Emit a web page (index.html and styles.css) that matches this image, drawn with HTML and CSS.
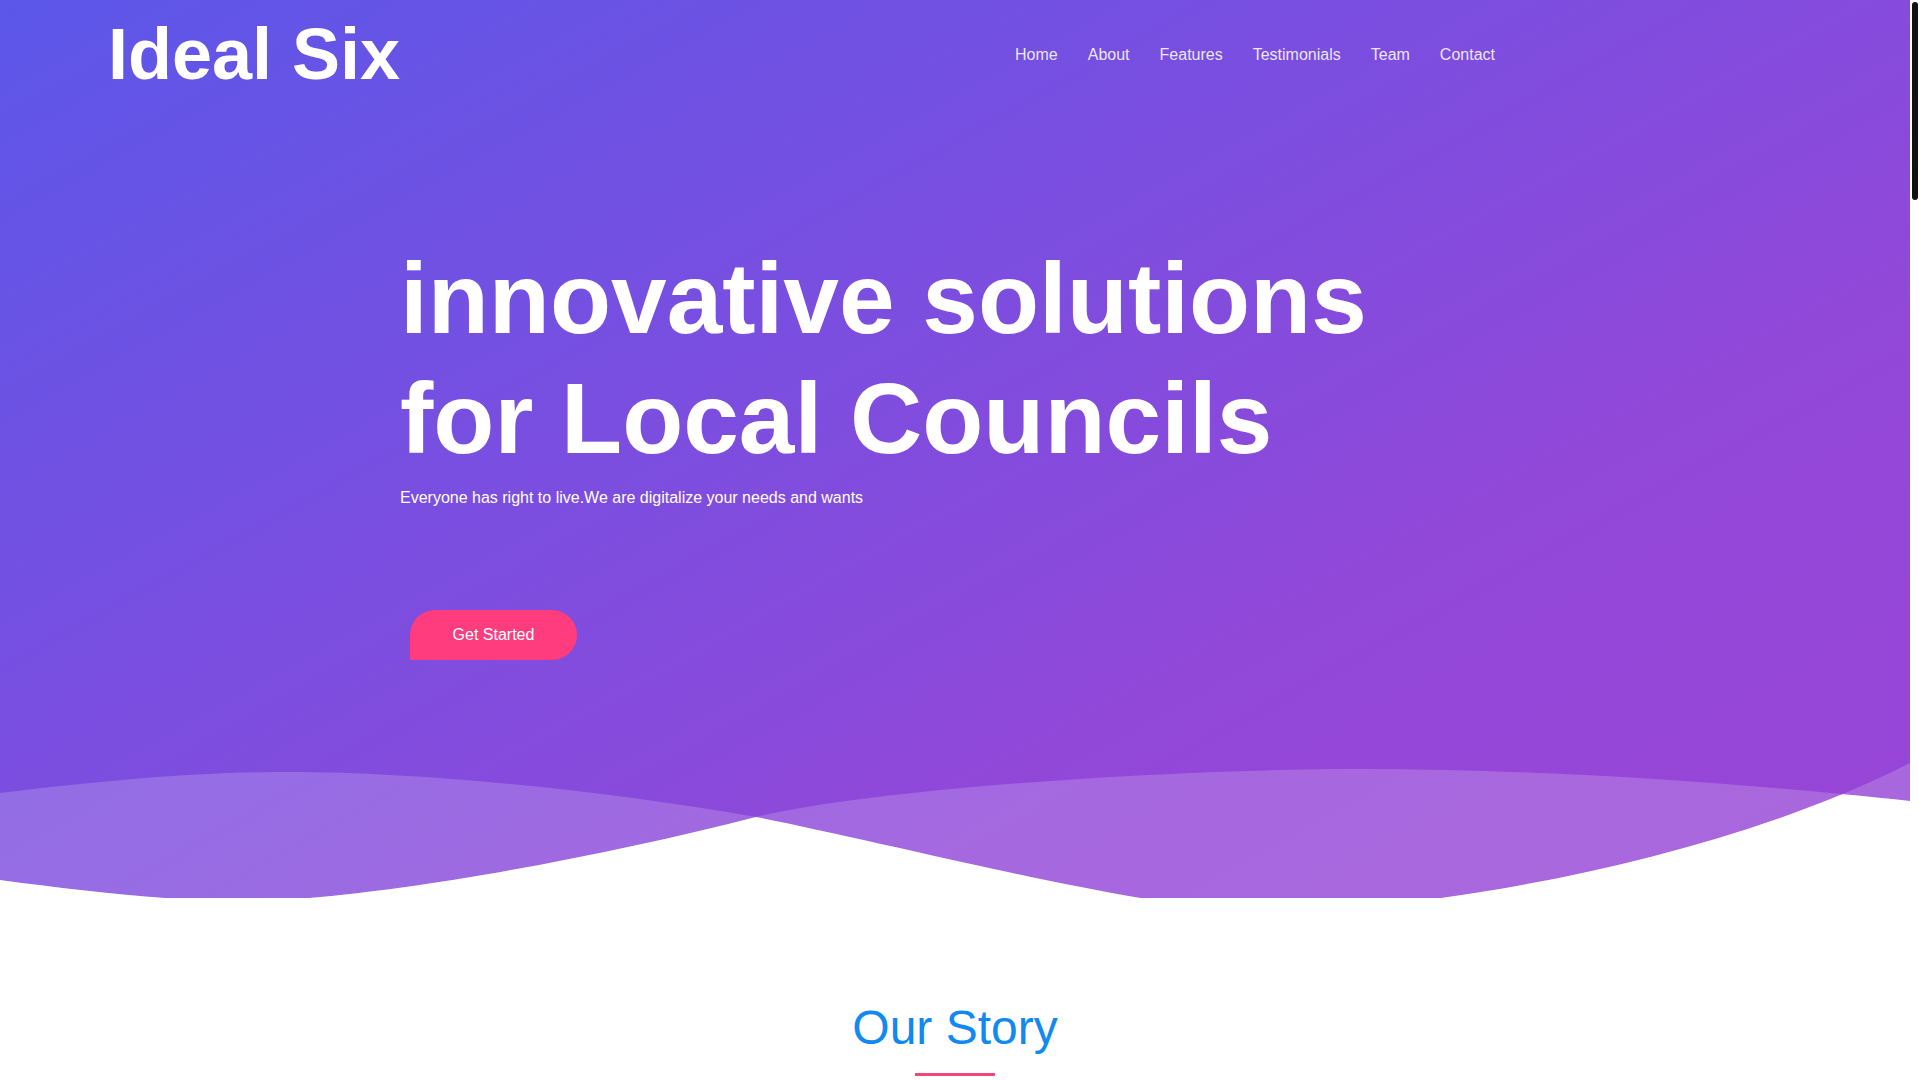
FILE: index.html
```html
<!DOCTYPE html>
<html lang="en">
<head>
<meta charset="utf-8">
<title>Ideal Six</title>
<link rel="stylesheet" href="styles.css">
</head>
<body>
<div class="page">
  <section class="hero">
    <header class="site-header">
      <a class="logo" href="#">Ideal Six</a>
      <nav class="main-nav">
        <a href="#">Home</a>
        <a href="#">About</a>
        <a href="#">Features</a>
        <a href="#">Testimonials</a>
        <a href="#">Team</a>
        <a href="#">Contact</a>
      </nav>
    </header>
    <div class="hero-content">
      <h1 class="hero-title">innovative solutions<br>for Local Councils</h1>
      <p class="hero-sub">Everyone has right to live.We are digitalize your needs and wants</p>
      <a class="btn-start" href="#">Get Started</a>
    </div>
    <svg class="hero-waves" viewBox="0 740 1910 158" preserveAspectRatio="none" aria-hidden="true">
      <defs>
        <clipPath id="clipA">
          <path d="M0 793 C120 779 200 772 290 772 C420 772 600 790 756 817 C900 845 1150 912 1270 912 C1400 912 1700 870 1910 763 L1910 898 L0 898 Z"/>
        </clipPath>
      </defs>
      <path class="wave-light" d="M0 793 C120 779 200 772 290 772 C420 772 600 790 756 817 C900 845 1150 912 1270 912 C1400 912 1700 870 1910 763 L1910 898 L0 898 Z"/>
      <path class="wave-light" d="M0 880 C90 892 170 901 245 901 C360 901 580 862 756 817 C860 791 1150 769 1360 769 C1560 769 1760 785 1910 801 L1910 898 L0 898 Z"/>
      <path class="wave-white" clip-path="url(#clipA)" d="M0 880 C90 892 170 901 245 901 C360 901 580 862 756 817 C860 791 1150 769 1360 769 C1560 769 1760 785 1910 801 L1910 898 L0 898 Z"/>
    </svg>
  </section>
  <section class="story">
    <h2 class="story-title">Our Story</h2>
    <div class="story-line"></div>
  </section>
</div>
<div class="scroll-rail" aria-hidden="true"><div class="scroll-thumb"></div></div>
</body>
</html>
```
FILE: styles.css
```css
html, body {
  margin: 0;
  padding: 0;
}
html {
  overflow: hidden;
}
body {
  font-family: "Liberation Sans", Arial, sans-serif;
  background: #fff;
  color: #222;
}
.page {
  width: calc(100% - 10px);
}
.scroll-rail {
  position: fixed;
  top: 0;
  right: 0;
  width: 10px;
  height: 100vh;
  background: #fff;
}
.scroll-thumb {
  width: 6px;
  height: 198px;
  margin: 2px 0 0 2px;
  background: #111;
  border-radius: 3px;
}
.hero {
  position: relative;
  height: 898px;
  background: linear-gradient(151deg, #5c57e9 0%, #9347d8 72%, #9846d6 100%);
  overflow: hidden;
}
.site-header {
  display: flex;
  align-items: center;
  justify-content: space-between;
  height: 108px;
  padding: 0 400px 0 108px;
}
.logo {
  font-size: 72px;
  font-weight: 700;
  line-height: 1;
  color: #fff;
  text-decoration: none;
}
.main-nav {
  display: flex;
  padding-top: 2px;
}
.main-nav a {
  padding: 0 15px;
  font-size: 16px;
  color: rgba(255, 255, 255, 0.88);
  text-decoration: none;
}
.hero-content {
  position: relative;
  z-index: 1;
  padding: 130px 0 0 400px;
}
.hero-title {
  margin: 0;
  font-size: 100px;
  line-height: 120px;
  font-weight: 700;
  color: #fff;
}
.hero-sub {
  margin: 8px 0 0;
  font-size: 16px;
  line-height: 24px;
  color: #fff;
}
.btn-start {
  display: flex;
  align-items: center;
  justify-content: center;
  width: 167px;
  height: 50px;
  margin: 100px 0 0 10px;
  background: #ff3c7e;
  color: #fff;
  font-size: 16px;
  text-decoration: none;
  border-radius: 25px 25px 25px 0;
}
.hero-waves {
  position: absolute;
  left: 0;
  bottom: 0;
  width: 100%;
  height: 158px;
  display: block;
}
.wave-light {
  fill: #fff;
  fill-opacity: 0.18;
}
.wave-white {
  fill: #fff;
}
.story {
  padding-top: 101px;
  min-height: 4900px;
  text-align: center;
}
.story-title {
  margin: 0;
  font-size: 48px;
  line-height: 1.2;
  font-weight: 400;
  color: #1089f0;
}
.story-line {
  width: 80px;
  height: 3px;
  margin: 16px auto 0;
  background: #f2457a;
}
```
